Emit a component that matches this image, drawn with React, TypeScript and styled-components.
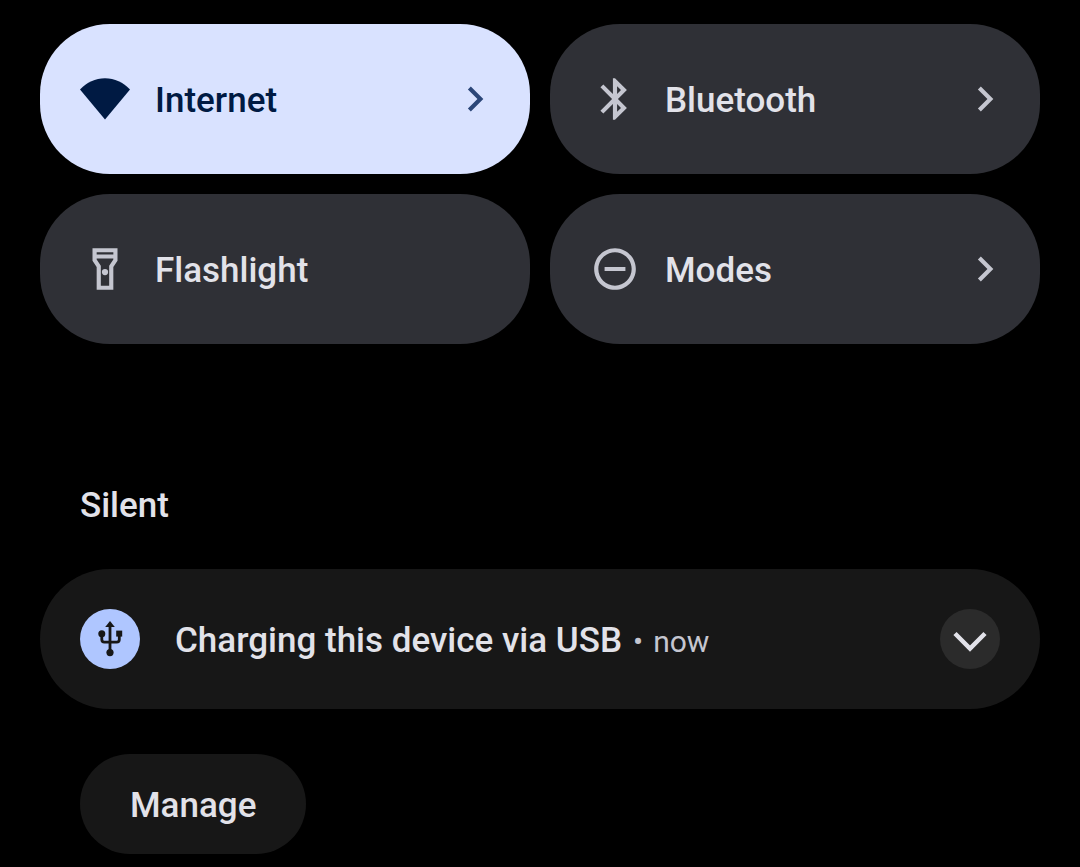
import React from "react";
import styled, { createGlobalStyle } from "styled-components";

const Global = createGlobalStyle`
  * { box-sizing: border-box; }
  body { margin: 0; background: #000; font-family: Roboto, sans-serif; }
  button { font-family: inherit; border: 0; cursor: pointer; }
  svg { display: block; flex: none; }
`;

const Shade = styled.main`
  padding: 24px 40px 13px;
`;

const Tiles = styled.section`
  display: grid;
  grid-template-columns: 1fr 1fr;
  gap: 20px;
`;

const Tile = styled.button<{ $on?: boolean }>`
  display: flex;
  align-items: center;
  height: 150px;
  padding: 0 30px 0 40px;
  border-radius: 70px;
  text-align: left;
  background: ${(p) => (p.$on ? "#d9e2ff" : "#2f3036")};
  color: ${(p) => (p.$on ? "#001a43" : "#e2e2e9")};
`;

const TileIcon = styled.span<{ $on?: boolean }>`
  display: flex;
  margin-right: 25px;
  color: ${(p) => (p.$on ? "#001a43" : "#c5c6d0")};
`;

const TileLabel = styled.span`
  flex: 1;
  padding-top: 4px;
  font-size: 35px;
  line-height: 42px;
  font-weight: 500;
`;

const TileChevron = styled.span<{ $on?: boolean }>`
  color: ${(p) => (p.$on ? "#2b4678" : "#c5c6d0")};
`;

const SectionTitle = styled.h2`
  margin: 141px 40px 42px;
  font-size: 35px;
  line-height: 42px;
  font-weight: 500;
  color: #e2e2e9;
`;

const Notification = styled.article`
  display: flex;
  align-items: center;
  height: 140px;
  padding: 0 40px;
  border-radius: 70px;
  background: #171717;
`;

const AppIcon = styled.span`
  width: 60px;
  height: 60px;
  margin-right: 35px;
  border-radius: 50%;
  background: #afc6ff;
  color: #171717;
`;

const Message = styled.p`
  flex: 1;
  display: flex;
  align-items: baseline;
  margin: 0;
  padding-top: 4px;
  color: #c5c6d0;
  font-size: 30px;
  line-height: 42px;
`;

const Headline = styled.strong`
  font-size: 35px;
  font-weight: 500;
  color: #e2e2e9;
`;

const Dot = styled.span`
  margin: 0 10px 0 11px;
`;

const Expand = styled.button`
  width: 60px;
  height: 60px;
  padding: 0;
  border-radius: 50%;
  background: #2b2b2b;
  color: #e2e2e9;
`;

const Manage = styled.button`
  height: 100px;
  margin: 45px 40px 0;
  padding: 4px 50px 0;
  border-radius: 50px;
  background: #171717;
  color: #e2e2e9;
  font-size: 35px;
  line-height: 42px;
  font-weight: 500;
`;

const Wifi = () => (
  <svg width="50" height="50" viewBox="0 0 24 24" fill="currentColor">
    <path d="M0 7.4C3.2 4 7.4 2 12 2S20.8 4 24 7.4L12 21.8Z" />
  </svg>
);

const Bluetooth = () => (
  <svg width="50" height="50" viewBox="0 0 24 24" fill="currentColor">
    <path d="M17.71 7.71L12 2h-1v7.59L6.41 5 5 6.41 10.59 12 5 17.59 6.41 19 11 14.41V22h1l5.71-5.71-4.3-4.29 4.3-4.29zM13 5.83l1.88 1.88L13 9.59V5.83zm1.88 10.46L13 18.17v-3.76l1.88 1.88z" />
  </svg>
);

const Flashlight = () => (
  <svg width="50" height="50" viewBox="0 0 24 24" fill="currentColor">
    <path d="M18 2H6v6l2 3v11h8V11l2-3V2zm-2 2v1H8V4h8zm-2 6.4V20h-4v-9.6l-2-3V7h8v.4l-2 3z" />
    <circle cx="12" cy="13.5" r="1.5" />
  </svg>
);

const Modes = () => (
  <svg width="50" height="50" viewBox="0 0 24 24" fill="currentColor">
    <path d="M12 2C6.48 2 2 6.48 2 12s4.48 10 10 10 10-4.48 10-10S17.52 2 12 2zm0 18c-4.41 0-8-3.59-8-8s3.59-8 8-8 8 3.59 8 8-3.59 8-8 8zM7 11h10v2H7z" />
  </svg>
);

const Chevron = () => (
  <svg width="50" height="50" viewBox="0 0 24 24" fill="currentColor">
    <path d="M10 6L8.59 7.41 13.17 12l-4.58 4.59L10 18l6-6z" />
  </svg>
);

const Usb = () => (
  <svg width="60" height="60" viewBox="0 0 60 60" fill="currentColor">
    <path
      d="M30 16V43M21.8 25V30.6Q21.8 33.2 24.4 33.2H36.7Q39.3 33.2 39.3 30.6V25"
      fill="none"
      stroke="currentColor"
      strokeWidth="2.8"
    />
    <path d="M30 12L34.8 18H25.2Z" />
    <circle cx="21.8" cy="24.8" r="3.5" />
    <path d="M36.2 21.6H42.2V27.6H36.2Z" />
    <circle cx="30" cy="43.6" r="3.6" />
  </svg>
);

const Down = () => (
  <svg width="60" height="60" viewBox="0 0 60 60" fill="none" stroke="currentColor" strokeWidth="4.5">
    <path d="M15 24.5L30 39.5L45 24.5" />
  </svg>
);

const tiles = [
  { label: "Internet", Icon: Wifi, on: true, more: true },
  { label: "Bluetooth", Icon: Bluetooth, on: false, more: true },
  { label: "Flashlight", Icon: Flashlight, on: false, more: false },
  { label: "Modes", Icon: Modes, on: false, more: true },
];

export default function App() {
  return (
    <>
      <Global />
      <Shade>
        <Tiles>
          {tiles.map(({ label, Icon, on, more }) => (
            <Tile key={label} type="button" $on={on} aria-pressed={on}>
              <TileIcon $on={on}><Icon /></TileIcon>
              <TileLabel>{label}</TileLabel>
              {more && <TileChevron $on={on}><Chevron /></TileChevron>}
            </Tile>
          ))}
        </Tiles>
        <SectionTitle>Silent</SectionTitle>
        <Notification>
          <AppIcon><Usb /></AppIcon>
          <Message>
            <Headline>Charging this device via USB</Headline>
            <Dot>•</Dot>
            <time>now</time>
          </Message>
          <Expand type="button" aria-label="Expand notification"><Down /></Expand>
        </Notification>
        <Manage type="button">Manage</Manage>
      </Shade>
    </>
  );
}
